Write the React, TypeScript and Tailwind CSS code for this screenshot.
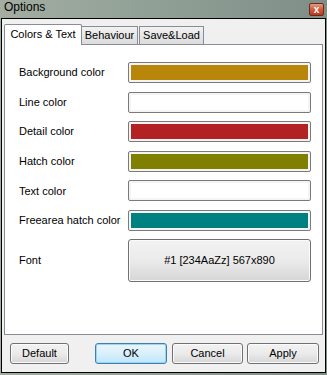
const rows = [
  { label: "Background color", color: "bg-[#b8860b]" },
  { label: "Line color", color: "bg-white" },
  { label: "Detail color", color: "bg-[#b22222]" },
  { label: "Hatch color", color: "bg-[#808000]" },
  { label: "Text color", color: "bg-white" },
  { label: "Freearea hatch color", color: "bg-[#008080]" },
];

function Swatch({ color }: { color: string }) {
  return (
    <div className="w-[183px] h-[21px] rounded-[2px] border border-[#7a7a7a] bg-[#f4f4f4] p-[2px]">
      <div className={`w-full h-full ${color}`}></div>
    </div>
  );
}

function Btn({ label, w, focus }: { label: string; w: string; focus?: boolean }) {
  return (
    <button
      className={`${w} h-[21px] rounded-[3px] border text-[11px] text-black flex items-center justify-center ${
        focus
          ? "border-[#3c7fb1] bg-gradient-to-b from-[#eaf6fd] via-[#d9f0fc] to-[#bee6fd] shadow-[inset_0_0_0_1px_#9ed4f0]"
          : "border-[#707070] bg-gradient-to-b from-[#f2f2f2] via-[#ebebeb] to-[#d6d6d6] shadow-[inset_0_0_0_1px_#fbfbfb]"
      }`}
    >
      {label}
    </button>
  );
}

export default function App() {
  return (
    <div
      className="w-[327px] h-[375px] flex flex-col bg-gradient-to-r from-[#a3ada1] via-[#8f9f95] to-[#7f8f88] px-[1px] pb-[2px] overflow-hidden"
      style={{ fontFamily: '"Liberation Sans", Arial, sans-serif' }}
    >
      {/* title bar */}
      <div className="h-[18px] flex items-start justify-between pl-[3px] pr-[2px]">
        <span className="text-[12px] leading-[15px] text-black">Options</span>
        <div className="mt-[3px] w-[15px] h-[13px] rounded-[2px] border border-[#6b2a1a] bg-gradient-to-b from-[#e59a80] via-[#cf5a3c] to-[#b8381e] flex items-center justify-center">
          <span className="text-white text-[10px] font-bold leading-none">x</span>
        </div>
      </div>

      {/* client area */}
      <div className="flex-1 flex flex-col border border-black bg-[#f0f0f0] pt-[4px] pl-[2px] pr-[2px]">
        {/* tabs */}
        <div className="flex items-end h-[21px] pl-0">
          <div className="relative z-10 w-[78px] h-[21px] -mb-[1px] border border-b-0 border-[#898c95] bg-white rounded-t-[2px] flex items-center justify-center pb-[2px]">
            <span className="text-[11px] text-black">Colors &amp; Text</span>
          </div>
          <div className="w-[56px] h-[18px] border border-b-0 border-l-0 border-[#898c95] bg-gradient-to-b from-[#f2f2f2] to-[#dcdcdc] flex items-center justify-center">
            <span className="text-[11px] text-black">Behaviour</span>
          </div>
          <div className="ml-[1px] w-[65px] h-[18px] border border-b-0 border-[#898c95] bg-gradient-to-b from-[#f2f2f2] to-[#dcdcdc] flex items-center justify-center">
            <span className="text-[11px] text-black">Save&amp;Load</span>
          </div>
        </div>

        {/* panel */}
        <div className="h-[291px] border border-[#898c95] bg-white flex flex-col gap-[8.6px] pt-[17px] pl-[14px]">
          {rows.map((r) => (
            <div key={r.label} className="flex items-center h-[21px]">
              <span className="w-[109px] text-[11px] text-black">{r.label}</span>
              <Swatch color={r.color} />
            </div>
          ))}
          <div className="flex items-center h-[43px] mt-[-0.6px]">
            <span className="w-[109px] text-[11px] text-black">Font</span>
            <button className="w-[183px] h-[43px] rounded-[3px] border border-[#707070] bg-gradient-to-b from-[#f2f2f2] via-[#ebebeb] to-[#d6d6d6] shadow-[inset_0_0_0_1px_#fbfbfb] text-[11px] text-black">
              #1 [234AaZz] 567x890
            </button>
          </div>
        </div>

        {/* buttons */}
        <div className="flex items-center mt-[8px] pl-[6px]">
          <Btn label="Default" w="w-[59px]" />
          <div className="ml-[26px]">
            <Btn label="OK" w="w-[72px]" focus />
          </div>
          <div className="ml-[5px]">
            <Btn label="Cancel" w="w-[71px]" />
          </div>
          <div className="ml-[4px]">
            <Btn label="Apply" w="w-[72px]" />
          </div>
        </div>
      </div>
    </div>
  );
}
